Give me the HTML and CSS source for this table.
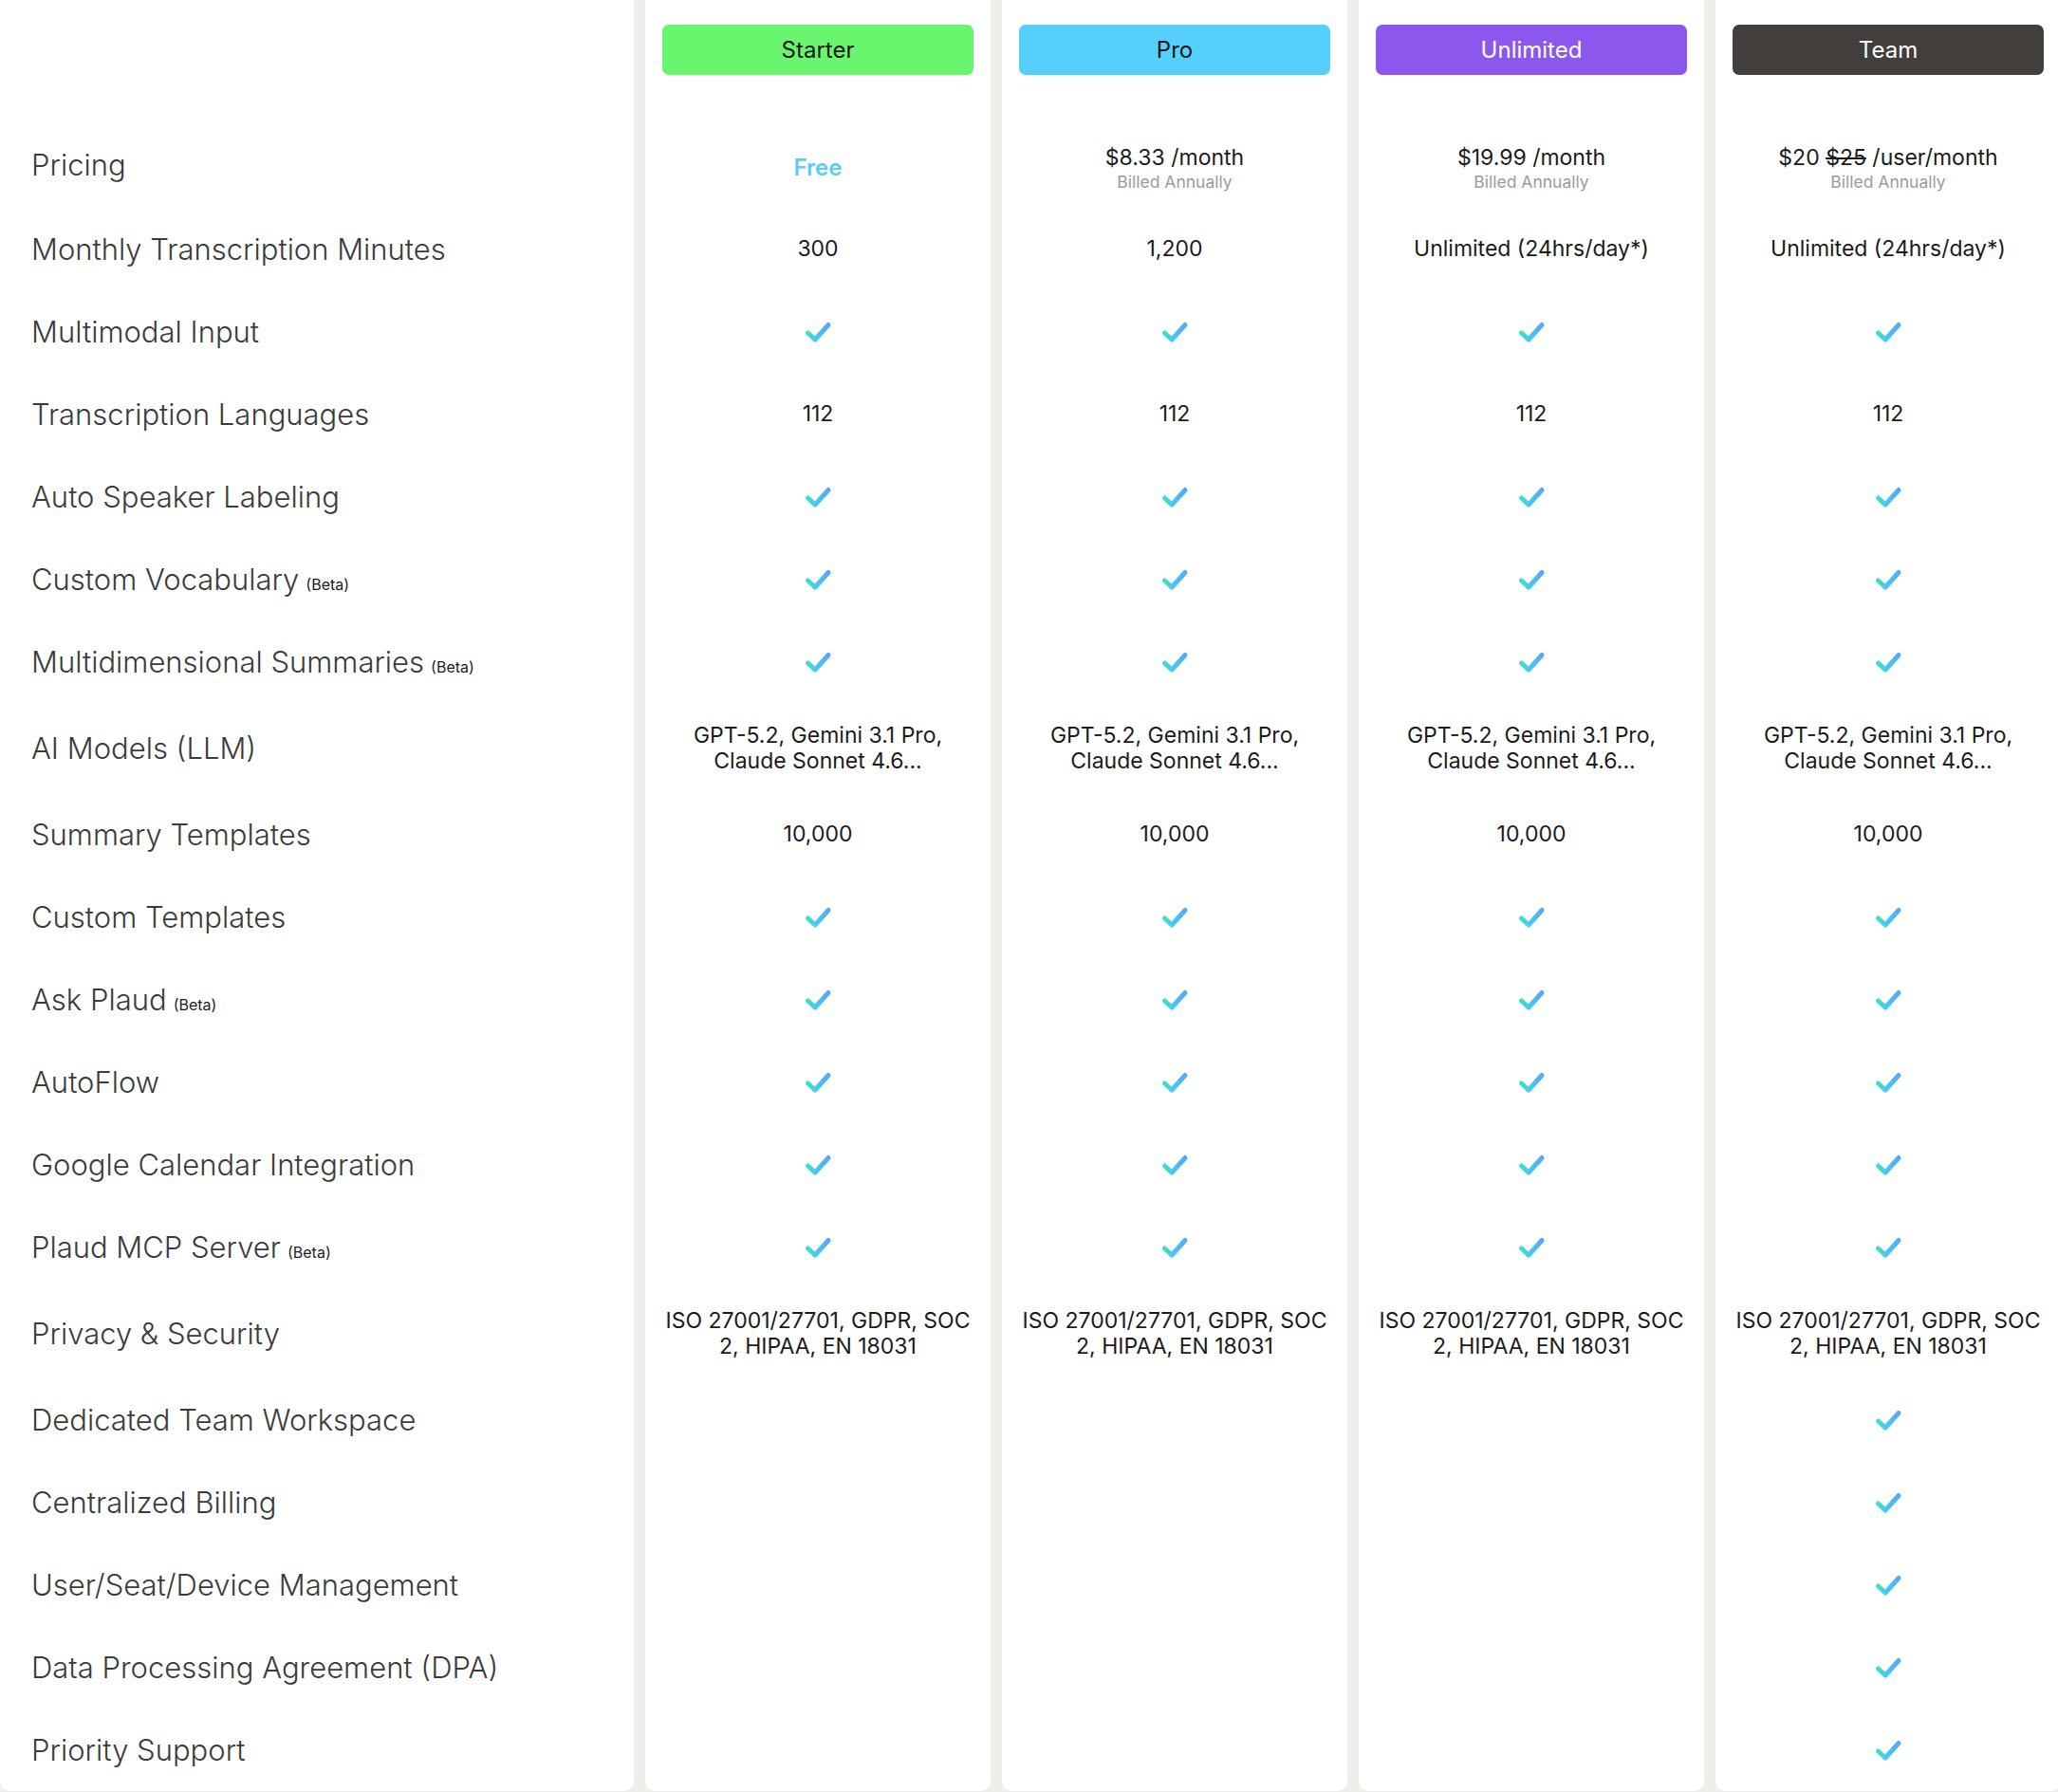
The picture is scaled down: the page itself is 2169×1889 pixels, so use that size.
FILE: index.html
```html
<!DOCTYPE html>
<html lang="en">
<head>
<meta charset="utf-8">
<title>Plaud plans comparison</title>
<link rel="stylesheet" href="styles.css">
</head>
<body>
<svg class="defs" width="0" height="0" aria-hidden="true">
  <defs>
    <linearGradient id="chkGrad" x1="4" y1="0" x2="28" y2="0" gradientUnits="userSpaceOnUse">
      <stop offset="0" stop-color="#3fe3b4"/>
      <stop offset="0.35" stop-color="#45cdf2"/>
      <stop offset="1" stop-color="#58a6f7"/>
    </linearGradient>
    <symbol id="chk" viewBox="0 0 32 28">
      <path d="M5.5 15 L13 22 L27 6.5" fill="none" stroke="url(#chkGrad)" stroke-width="5" stroke-linecap="round" stroke-linejoin="round"/>
    </symbol>
  </defs>
</svg>

<div class="compare">
  <!-- header -->
  <div class="cell label head"></div>
  <div class="cell head"><div class="plan plan-starter">Starter</div></div>
  <div class="cell head"><div class="plan plan-pro">Pro</div></div>
  <div class="cell head"><div class="plan plan-unlimited">Unlimited</div></div>
  <div class="cell head"><div class="plan plan-team">Team</div></div>

  <!-- Pricing -->
  <div class="cell label">Pricing</div>
  <div class="cell value"><span class="free">Free</span></div>
  <div class="cell value price"><span class="amount">$8.33 /month</span><span class="billed">Billed Annually</span></div>
  <div class="cell value price"><span class="amount">$19.99 /month</span><span class="billed">Billed Annually</span></div>
  <div class="cell value price"><span class="amount">$20 <s>$25</s> /user/month</span><span class="billed">Billed Annually</span></div>

  <!-- Monthly Transcription Minutes -->
  <div class="cell label">Monthly Transcription Minutes</div>
  <div class="cell value">300</div>
  <div class="cell value">1,200</div>
  <div class="cell value">Unlimited (24hrs/day*)</div>
  <div class="cell value">Unlimited (24hrs/day*)</div>

  <!-- Multimodal Input -->
  <div class="cell label">Multimodal Input</div>
  <div class="cell value"><svg class="check"><use href="#chk"/></svg></div>
  <div class="cell value"><svg class="check"><use href="#chk"/></svg></div>
  <div class="cell value"><svg class="check"><use href="#chk"/></svg></div>
  <div class="cell value"><svg class="check"><use href="#chk"/></svg></div>

  <!-- Transcription Languages -->
  <div class="cell label">Transcription Languages</div>
  <div class="cell value">112</div>
  <div class="cell value">112</div>
  <div class="cell value">112</div>
  <div class="cell value">112</div>

  <!-- Auto Speaker Labeling -->
  <div class="cell label">Auto Speaker Labeling</div>
  <div class="cell value"><svg class="check"><use href="#chk"/></svg></div>
  <div class="cell value"><svg class="check"><use href="#chk"/></svg></div>
  <div class="cell value"><svg class="check"><use href="#chk"/></svg></div>
  <div class="cell value"><svg class="check"><use href="#chk"/></svg></div>

  <!-- Custom Vocabulary -->
  <div class="cell label"><span>Custom Vocabulary<span class="beta">(Beta)</span></span></div>
  <div class="cell value"><svg class="check"><use href="#chk"/></svg></div>
  <div class="cell value"><svg class="check"><use href="#chk"/></svg></div>
  <div class="cell value"><svg class="check"><use href="#chk"/></svg></div>
  <div class="cell value"><svg class="check"><use href="#chk"/></svg></div>

  <!-- Multidimensional Summaries -->
  <div class="cell label"><span>Multidimensional Summaries<span class="beta">(Beta)</span></span></div>
  <div class="cell value"><svg class="check"><use href="#chk"/></svg></div>
  <div class="cell value"><svg class="check"><use href="#chk"/></svg></div>
  <div class="cell value"><svg class="check"><use href="#chk"/></svg></div>
  <div class="cell value"><svg class="check"><use href="#chk"/></svg></div>

  <!-- AI Models -->
  <div class="cell label">AI Models (LLM)</div>
  <div class="cell value multi">GPT-5.2, Gemini 3.1 Pro,<br>Claude Sonnet 4.6...</div>
  <div class="cell value multi">GPT-5.2, Gemini 3.1 Pro,<br>Claude Sonnet 4.6...</div>
  <div class="cell value multi">GPT-5.2, Gemini 3.1 Pro,<br>Claude Sonnet 4.6...</div>
  <div class="cell value multi">GPT-5.2, Gemini 3.1 Pro,<br>Claude Sonnet 4.6...</div>

  <!-- Summary Templates -->
  <div class="cell label">Summary Templates</div>
  <div class="cell value">10,000</div>
  <div class="cell value">10,000</div>
  <div class="cell value">10,000</div>
  <div class="cell value">10,000</div>

  <!-- Custom Templates -->
  <div class="cell label">Custom Templates</div>
  <div class="cell value"><svg class="check"><use href="#chk"/></svg></div>
  <div class="cell value"><svg class="check"><use href="#chk"/></svg></div>
  <div class="cell value"><svg class="check"><use href="#chk"/></svg></div>
  <div class="cell value"><svg class="check"><use href="#chk"/></svg></div>

  <!-- Ask Plaud -->
  <div class="cell label"><span>Ask Plaud<span class="beta">(Beta)</span></span></div>
  <div class="cell value"><svg class="check"><use href="#chk"/></svg></div>
  <div class="cell value"><svg class="check"><use href="#chk"/></svg></div>
  <div class="cell value"><svg class="check"><use href="#chk"/></svg></div>
  <div class="cell value"><svg class="check"><use href="#chk"/></svg></div>

  <!-- AutoFlow -->
  <div class="cell label">AutoFlow</div>
  <div class="cell value"><svg class="check"><use href="#chk"/></svg></div>
  <div class="cell value"><svg class="check"><use href="#chk"/></svg></div>
  <div class="cell value"><svg class="check"><use href="#chk"/></svg></div>
  <div class="cell value"><svg class="check"><use href="#chk"/></svg></div>

  <!-- Google Calendar Integration -->
  <div class="cell label">Google Calendar Integration</div>
  <div class="cell value"><svg class="check"><use href="#chk"/></svg></div>
  <div class="cell value"><svg class="check"><use href="#chk"/></svg></div>
  <div class="cell value"><svg class="check"><use href="#chk"/></svg></div>
  <div class="cell value"><svg class="check"><use href="#chk"/></svg></div>

  <!-- Plaud MCP Server -->
  <div class="cell label"><span>Plaud MCP Server<span class="beta">(Beta)</span></span></div>
  <div class="cell value"><svg class="check"><use href="#chk"/></svg></div>
  <div class="cell value"><svg class="check"><use href="#chk"/></svg></div>
  <div class="cell value"><svg class="check"><use href="#chk"/></svg></div>
  <div class="cell value"><svg class="check"><use href="#chk"/></svg></div>

  <!-- Privacy & Security -->
  <div class="cell label">Privacy &amp; Security</div>
  <div class="cell value multi">ISO 27001/27701, GDPR, SOC<br>2, HIPAA, EN 18031</div>
  <div class="cell value multi">ISO 27001/27701, GDPR, SOC<br>2, HIPAA, EN 18031</div>
  <div class="cell value multi">ISO 27001/27701, GDPR, SOC<br>2, HIPAA, EN 18031</div>
  <div class="cell value multi">ISO 27001/27701, GDPR, SOC<br>2, HIPAA, EN 18031</div>

  <!-- Dedicated Team Workspace -->
  <div class="cell label">Dedicated Team Workspace</div>
  <div class="cell value"></div>
  <div class="cell value"></div>
  <div class="cell value"></div>
  <div class="cell value"><svg class="check"><use href="#chk"/></svg></div>

  <!-- Centralized Billing -->
  <div class="cell label">Centralized Billing</div>
  <div class="cell value"></div>
  <div class="cell value"></div>
  <div class="cell value"></div>
  <div class="cell value"><svg class="check"><use href="#chk"/></svg></div>

  <!-- User/Seat/Device Management -->
  <div class="cell label">User/Seat/Device Management</div>
  <div class="cell value"></div>
  <div class="cell value"></div>
  <div class="cell value"></div>
  <div class="cell value"><svg class="check"><use href="#chk"/></svg></div>

  <!-- DPA -->
  <div class="cell label">Data Processing Agreement (DPA)</div>
  <div class="cell value"></div>
  <div class="cell value"></div>
  <div class="cell value"></div>
  <div class="cell value"><svg class="check"><use href="#chk"/></svg></div>

  <!-- Priority Support -->
  <div class="cell label last">Priority Support</div>
  <div class="cell value last"></div>
  <div class="cell value last"></div>
  <div class="cell value last"></div>
  <div class="cell value last"><svg class="check"><use href="#chk"/></svg></div>
</div>
</body>
</html>
```

FILE: styles.css
```css
html, body {
  margin: 0;
  padding: 0;
}

body {
  background: #efeeea;
  font-family: "Inter", "Liberation Sans", sans-serif;
  color: #1b1b1b;
  overflow: hidden;
}

.defs {
  position: absolute;
  width: 0;
  height: 0;
  overflow: hidden;
}

.compare {
  display: grid;
  grid-template-columns: 668px repeat(4, 364px);
  grid-template-rows: 128px 91px repeat(6, 87px) 95px repeat(6, 87px) 95px repeat(5, 87px);
  column-gap: 12px;
  width: max-content;
}

.cell {
  background: #ffffff;
  display: flex;
  align-items: center;
  min-width: 0;
}

.cell.last {
  border-radius: 0 0 10px 10px;
}

/* header */
.head {
  align-items: flex-start;
  padding: 26px 18px 0;
}

.label.head {
  padding: 0;
}

.plan {
  flex: 1;
  height: 53px;
  border-radius: 7px;
  display: flex;
  align-items: center;
  justify-content: center;
  font-size: 24px;
  font-weight: 400;
}

.plan-starter { background: #69f56d; color: #151515; }
.plan-pro { background: #55d0fd; color: #151515; }
.plan-unlimited { background: #8c57ec; color: #ffffff; }
.plan-team { background: #423e3b; color: #ffffff; }

/* labels */
.label {
  padding-left: 33px;
  font-size: 31px;
  font-weight: 300;
  color: #3b3b3b;
}

.beta {
  font-size: 16px;
  font-weight: 400;
  color: #1e1e1e;
  margin-left: 7px;
}

/* values */
.value {
  justify-content: center;
  text-align: center;
  font-size: 23px;
  line-height: 27px;
  font-weight: 400;
  color: #1b1b1b;
  padding: 0 14px;
}

.price {
  flex-direction: column;
  padding-top: 8px;
}

.price s {
  text-decoration-thickness: 2px;
}

.amount {
  line-height: 28px;
}

.billed {
  font-size: 17.5px;
  line-height: 24px;
  color: #9b9b9b;
}

.free {
  color: #5ccbf7;
  font-weight: 600;
  font-size: 24px;
  padding-top: 6px;
}

.check {
  width: 32px;
  height: 28px;
  display: block;
}
```
